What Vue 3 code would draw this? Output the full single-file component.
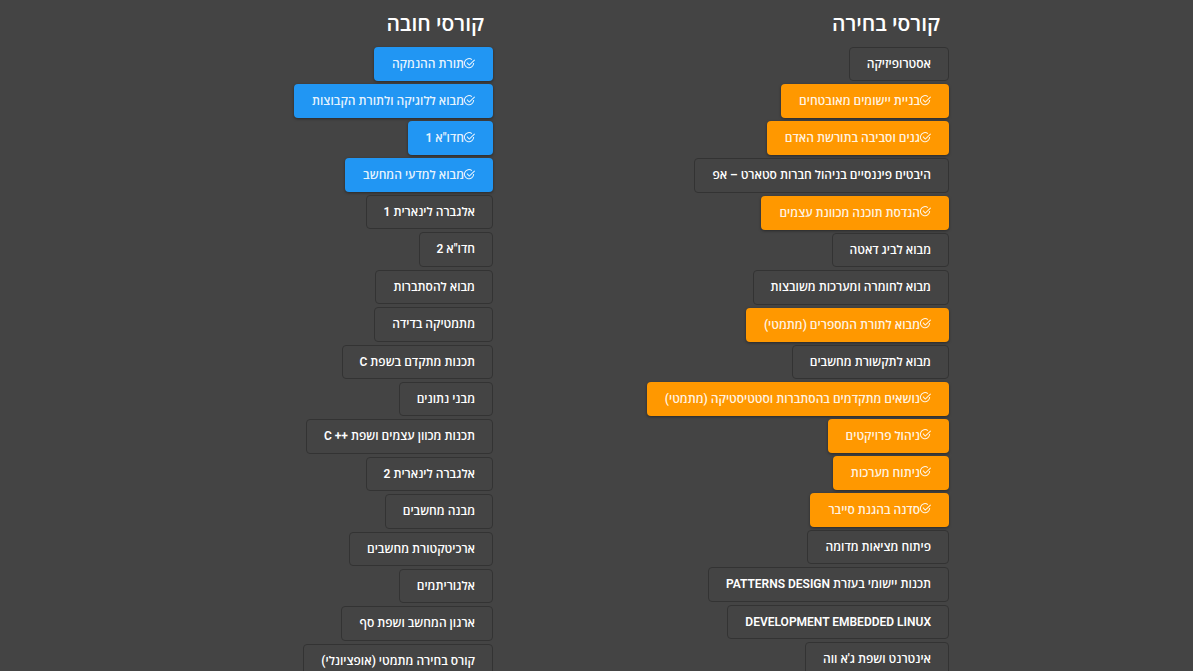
<script setup>
import { ref } from 'vue'

const c = (name, taken = false) => ({ name, taken })

const groups = ref([
  {
    id: 'elective',
    title: 'קורסי בחירה',
    courses: [
      c('אסטרופיזיקה'),
      c('בניית יישומים מאובטחים', true),
      c('גנים וסביבה בתורשת האדם', true),
      c('היבטים פיננסיים בניהול חברות סטארט – אפ'),
      c('הנדסת תוכנה מכוונת עצמים', true),
      c('מבוא לביג דאטה'),
      c('מבוא לחומרה ומערכות משובצות'),
      c('מבוא לתורת המספרים (מתמטי)', true),
      c('מבוא לתקשורת מחשבים'),
      c('נושאים מתקדמים בהסתברות וסטטיסטיקה (מתמטי)', true),
      c('ניהול פרויקטים', true),
      c('ניתוח מערכות', true),
      c('סדנה בהגנת סייבר', true),
      c('פיתוח מציאות מדומה'),
      c('תכנות יישומי בעזרת PATTERNS DESIGN'),
      c('DEVELOPMENT EMBEDDED LINUX'),
      c("אינטרנט ושפת ג'א ווה"),
    ],
  },
  {
    id: 'required',
    title: 'קורסי חובה',
    courses: [
      c('תורת ההנמקה', true),
      c('מבוא ללוגיקה ולתורת הקבוצות', true),
      c('חדו"א 1', true),
      c('מבוא למדעי המחשב', true),
      c('אלגברה לינארית 1'),
      c('חדו"א 2'),
      c('מבוא להסתברות'),
      c('מתמטיקה בדידה'),
      c('תכנות מתקדם בשפת C'),
      c('מבני נתונים'),
      c('תכנות מכוון עצמים ושפת ++ C'),
      c('אלגברה לינארית 2'),
      c('מבנה מחשבים'),
      c('ארכיטקטורת מחשבים'),
      c('אלגוריתמים'),
      c('ארגון המחשב ושפת סף'),
      c('קורס בחירה מתמטי (אופציונלי)'),
    ],
  },
])
</script>

<template>
  <main class="page" dir="rtl">
    <section v-for="g in groups" :key="g.id" class="group" :class="g.id">
      <h2 class="title">{{ g.title }}</h2>
      <button
        v-for="course in g.courses"
        :key="course.name"
        type="button"
        class="course"
        :class="{ taken: course.taken }"
        :aria-pressed="course.taken"
        @click="course.taken = !course.taken"
      >
        <svg v-if="course.taken" class="check" viewBox="0 0 24 24" aria-hidden="true">
          <path d="M17.2 3.4A10 10 0 1 0 21 11" />
          <path d="M6.5 10l5 5.5L23.3 3.8" />
        </svg>
        <span>{{ course.name }}</span>
      </button>
    </section>
  </main>
</template>

<style scoped>
.page {
  display: grid;
  grid-template-columns: 244fr 456fr 493fr;
  height: 100vh;
  overflow: hidden;
  background: #444;
  color: #fff;
  font-family: Roboto, "Open Sans", sans-serif;
}
.group {
  display: flex;
  flex-direction: column;
  align-items: flex-start;
  gap: 3px;
}
.elective {
  grid-column: 2;
}
.required {
  grid-column: 3;
}
.title {
  margin: 8px 9px 4px;
  font-size: 21px;
  line-height: 32px;
  font-weight: 600;
}
.course {
  display: inline-flex;
  flex-shrink: 0;
  align-items: center;
  box-sizing: border-box;
  padding: 5px 17px 4px;
  border: 1px solid #333;
  border-radius: 4px;
  background: transparent;
  color: #fff;
  font-family: inherit;
  font-size: 12px;
  font-weight: 600;
  line-height: 1.95;
  white-space: nowrap;
  cursor: pointer;
}
.course.taken {
  padding: 5px 18px;
  border: 0;
  line-height: 24px;
  color: rgba(255, 255, 255, 0.9);
  box-shadow: 0 1px 3px rgba(0, 0, 0, 0.4);
}
.elective .taken {
  background: #ff9800;
}
.required .taken {
  background: #2196f3;
}
.check {
  width: 11px;
  height: 11px;
  margin-bottom: 2px;
  fill: none;
  stroke: currentColor;
  stroke-width: 2.2;
}
</style>

<style>
body {
  background: #444;
}
</style>
